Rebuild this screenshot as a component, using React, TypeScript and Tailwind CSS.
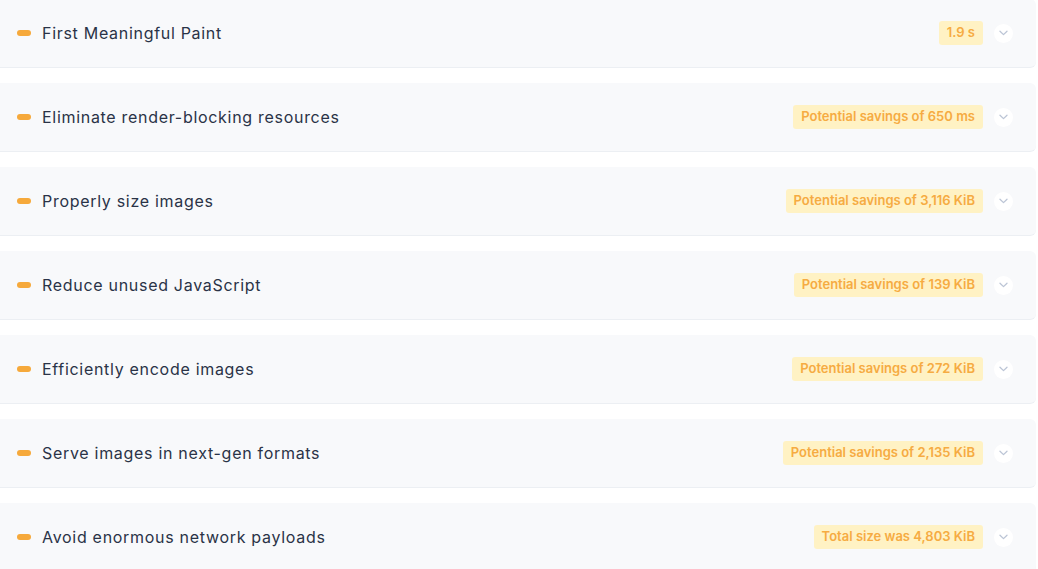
import React from "react";

const rows = [
  { title: "First Meaningful Paint", value: "1.9 s" },
  { title: "Eliminate render-blocking resources", value: "Potential savings of 650 ms" },
  { title: "Properly size images", value: "Potential savings of 3,116 KiB" },
  { title: "Reduce unused JavaScript", value: "Potential savings of 139 KiB" },
  { title: "Efficiently encode images", value: "Potential savings of 272 KiB" },
  { title: "Serve images in next-gen formats", value: "Potential savings of 2,135 KiB" },
  { title: "Avoid enormous network payloads", value: "Total size was 4,803 KiB" },
];

function Chevron() {
  return (
    <div className="w-[19px] h-[19px] rounded-full bg-white flex items-center justify-center">
      <svg width="9" height="6" viewBox="0 0 9 6" fill="none">
        <path d="M1 1.2 L4.5 4.6 L8 1.2" stroke="#bcc5d6" strokeWidth="1.3" strokeLinecap="round" strokeLinejoin="round" />
      </svg>
    </div>
  );
}

export default function App() {
  return (
    <div className="w-[1038px] h-[569px] overflow-hidden bg-white" style={{ fontFamily: "Inter, 'Noto Sans', sans-serif" }}>
      <div className="-ml-[8px] pr-[2px] -mt-[1px] flex flex-col gap-[15px]">
        {rows.map((r) => (
          <div
            key={r.title}
            className="h-[69px] bg-[#f8f9fb] rounded-[6px] border-b border-[#eceff3] flex items-center pl-[25px] pr-[23px]"
          >
            <span className="w-[14px] h-[6px] rounded-full bg-[#f6a93b] shrink-0" />
            <span className="ml-[11px] text-[16px] text-[#2a3347] tracking-[0.7px]">{r.title}</span>
            <div className="ml-auto flex items-center gap-[11px]">
              <span className="h-[24px] px-[8px] rounded-[3px] bg-[#fff2c4] text-[#f6ab42] text-[13px] font-semibold flex items-center">
                {r.value}
              </span>
              <Chevron />
            </div>
          </div>
        ))}
      </div>
    </div>
  );
}
